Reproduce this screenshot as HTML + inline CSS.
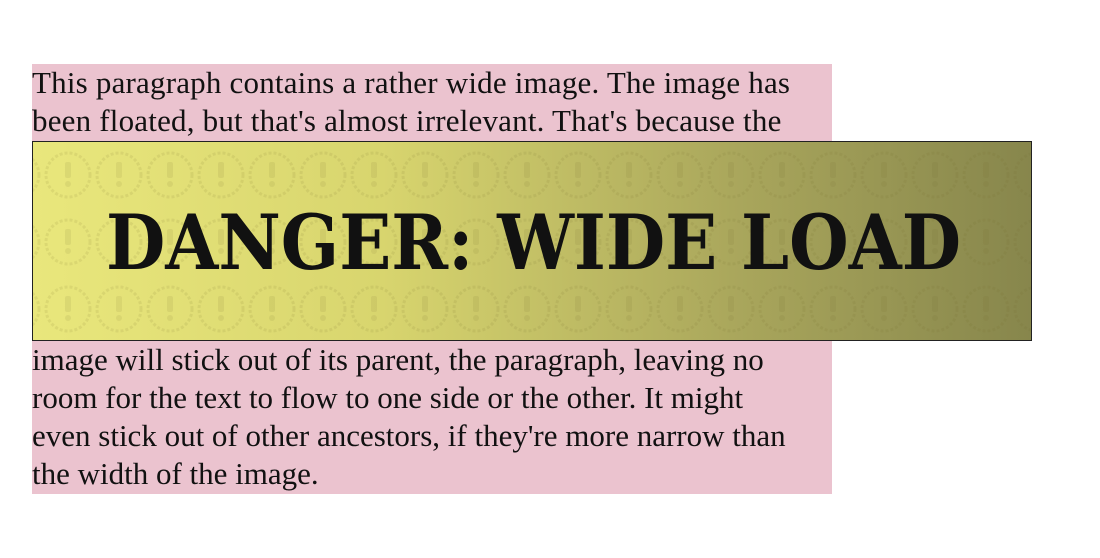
<!DOCTYPE html>
<html><head><meta charset="utf-8"><style>
html,body{margin:0;padding:0;background:#fff;width:1100px;height:558px;overflow:hidden}
p{position:absolute;left:32px;top:64px;width:800px;margin:0;background:#ebc3cf;
font-family:"Liberation Serif",serif;font-size:31px;line-height:38.3px;color:#111}
.l{display:block;white-space:nowrap}
.img{display:block;width:998px;height:198px;border:1px solid #222;margin:0;position:relative;
background:linear-gradient(to right,#e9e77c 0%,#d8d56e 35%,#aaa75c 70%,#87864c 100%);overflow:hidden}
.img svg{position:absolute;left:0;top:0}
</style></head><body>
<p><span class="l" style="letter-spacing:0.2px">This paragraph contains a rather wide image. The image has</span><span class="l" style="letter-spacing:0.2px">been floated, but that's almost irrelevant. That's because the</span><span class="img"><svg width="998" height="198">
<defs><pattern id="pt" x="10" y="8" width="51" height="67" patternUnits="userSpaceOnUse">
<circle cx="25" cy="25" r="22" fill="none" stroke="rgba(110,100,40,0.11)" stroke-width="3" stroke-dasharray="3 2"/>
<rect x="22" y="12" width="6" height="16" rx="2" fill="rgba(110,100,40,0.1)"/>
<circle cx="25" cy="34" r="3" fill="rgba(110,100,40,0.1)"/>
</pattern></defs>
<rect width="998" height="198" fill="url(#pt)"/>
<text x="73" y="127" font-family="DejaVu Serif Condensed,DejaVu Serif,serif" font-weight="bold" font-size="76" fill="#111" textLength="855" lengthAdjust="spacingAndGlyphs">DANGER: WIDE  LOAD</text>
</svg></span><span class="l">image will stick out of its parent, the paragraph, leaving no</span><span class="l">room for the text to flow to one side or the other. It might</span><span class="l">even stick out of other ancestors, if they're more narrow than</span><span class="l">the width of the image.</span></p>
</body></html>
